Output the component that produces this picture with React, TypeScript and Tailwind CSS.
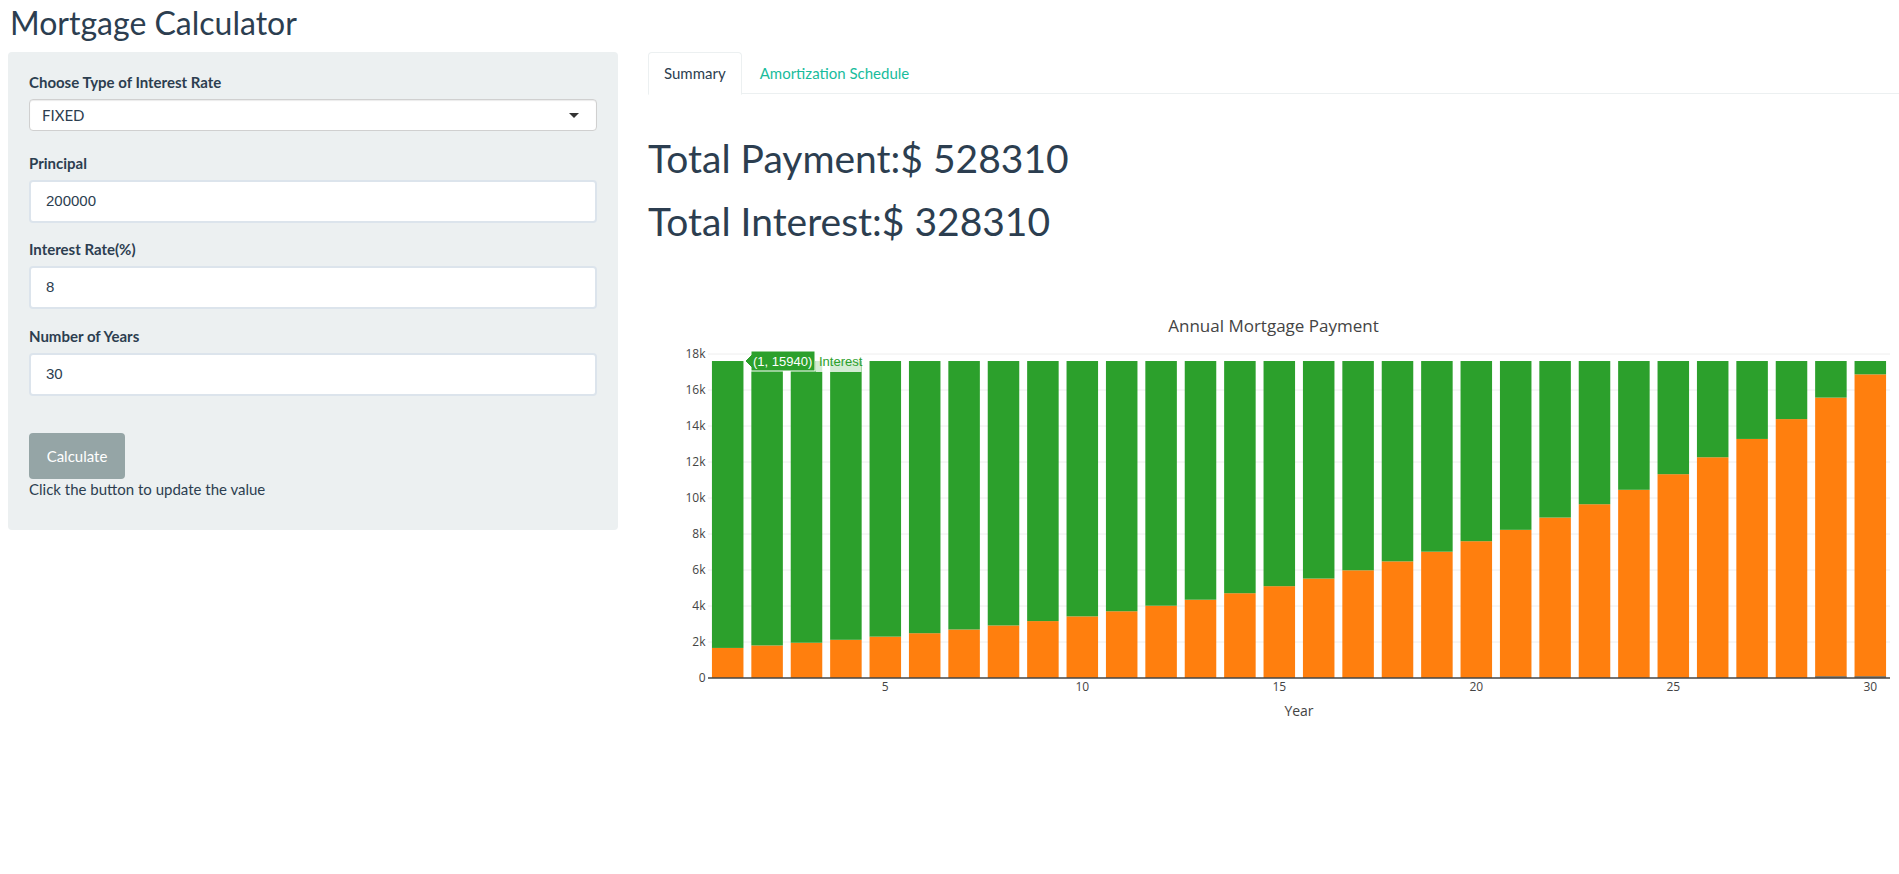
import React from "react";

type YearRow = { year: number; interest: number; principal: number };

function amortize(P: number, annualRate: number, years: number): YearRow[] {
  const r = annualRate / 100 / 12;
  const n = years * 12;
  const M = (P * r) / (1 - Math.pow(1 + r, -n));
  let bal = P;
  const rows: YearRow[] = [];
  for (let y = 1; y <= years; y++) {
    let interest = 0;
    let principal = 0;
    for (let m = 0; m < 12; m++) {
      const i = bal * r;
      const p = M - i;
      bal -= p;
      interest += i;
      principal += p;
    }
    rows.push({ year: y, interest, principal });
  }
  return rows;
}

function Chart({ rows }: { rows: YearRow[] }) {
  const X0 = 60;
  const X1 = 1242;
  const Y0 = 398;
  const k = 324 / 18000;
  const step = (X1 - X0) / rows.length;
  const bw = step * 0.8;
  const grid = [2000, 4000, 6000, 8000, 10000, 12000, 14000, 16000, 18000];
  const yLabels = [0, ...grid];
  const xTicks = [5, 10, 15, 20, 25, 30];
  return (
    <svg width={1251} height={450} className="block font-['Open_Sans',sans-serif]">
      <text x={625.5} y={52} textAnchor="middle" fontSize={17} fill="#444">
        Annual Mortgage Payment
      </text>
      {grid.map((g) => (
        <line key={g} x1={X0} x2={X1} y1={Y0 - g * k} y2={Y0 - g * k} stroke="#eee" strokeWidth={1} />
      ))}
      {yLabels.map((g) => (
        <text key={g} x={57.5} y={Y0 - g * k + 4.3} textAnchor="end" fontSize={12} fill="#444">
          {g === 0 ? "0" : `${g / 1000}k`}
        </text>
      ))}
      {rows.map((row, idx) => {
        const cx = X0 + (idx + 0.5) * step;
        const ph = row.principal * k;
        const ih = row.interest * k;
        return (
          <g key={row.year}>
            <rect x={cx - bw / 2} y={Y0 - ph} width={bw} height={ph} fill="#ff7f0e" />
            <rect x={cx - bw / 2} y={Y0 - ph - ih} width={bw} height={ih} fill="#2ca02c" />
            {row.year >= 29 && (
              <rect x={cx - bw / 2} y={Y0 - 1.5} width={bw} height={1} fill="#1f77b4" />
            )}
          </g>
        );
      })}
      <line x1={X0} x2={X1} y1={Y0} y2={Y0} stroke="#444" strokeWidth={1.3} />
      {xTicks.map((t) => (
        <text key={t} x={X0 + (t - 0.5) * step} y={411} textAnchor="middle" fontSize={12} fill="#444">
          {t}
        </text>
      ))}
      <text x={651} y={436} textAnchor="middle" fontSize={14} fill="#444">
        Year
      </text>
      <path d="M97,81 l6,-6 v-4 h64 v20 h-64 v-4 z" fill="#2ca02c" stroke="#ffffff" strokeWidth={1} />
      <rect x={167.5} y={71} width={46} height={21} fill="#ffffff" fillOpacity={0.8} />
      <text x={105} y={86} fontSize={13} fill="#ffffff" className="font-['Liberation_Sans',Arial,sans-serif]">
        (1, 15940)
      </text>
      <text x={171} y={86} fontSize={13} fill="#2ca02c" className="font-['Liberation_Sans',Arial,sans-serif]">
        Interest
      </text>
    </svg>
  );
}

function Field({ label, value, mb }: { label: string; value: string; mb: string }) {
  return (
    <div className={mb}>
      <div className="h-[21px] text-[15px] leading-[21px] font-bold mb-[6px]">{label}</div>
      <div className="h-[43px] rounded-[4px] border-2 border-[#dce4ec] bg-white flex items-center px-[15px] font-['Liberation_Sans',Arial,sans-serif] text-[15px] text-[#2c3e50]">
        {value}
      </div>
    </div>
  );
}

export default function App() {
  const rows = amortize(200000, 8, 30);
  return (
    <div className="min-h-screen bg-white font-['Lato',sans-serif] text-[#2c3e50]">
      <h2 className="pl-[10px] pt-[5px] text-[32px] leading-[35px] mb-[12px]">Mortgage Calculator</h2>
      <div className="flex items-start">
        <div className="ml-[8px] w-[610px] shrink-0 rounded-[4px] bg-[#ecf0f1] px-[21px] pt-[20px] pb-[30px]">
          <div className="mb-[22px]">
            <div className="h-[21px] text-[15px] leading-[21px] font-bold mb-[6px]">Choose Type of Interest Rate</div>
            <div className="h-[32px] rounded-[4px] border border-[#d0d0d0] bg-white flex items-center justify-between pl-[12px] pr-[17px] text-[15px] shadow-[inset_0_1px_1px_rgba(0,0,0,0.08)]">
              <span>FIXED</span>
              <svg width="10" height="5" viewBox="0 0 10 5">
                <path d="M0,0 H10 L5,5 Z" fill="#333" />
              </svg>
            </div>
          </div>
          <Field label="Principal" value="200000" mb="mb-[16px]" />
          <Field label="Interest Rate(%)" value="8" mb="mb-[17px]" />
          <Field label="Number of Years" value="30" mb="mb-[37px]" />
          <button className="h-[46px] w-[96px] rounded-[4px] bg-[#95a5a6] text-white text-[15px] leading-[21px]">
            Calculate
          </button>
          <div className="text-[15px] leading-[21px]">Click the button to update the value</div>
        </div>
        <div className="ml-[30px] flex-1 min-w-0">
          <div className="flex border-b border-[#ecf0f1] h-[42px]">
            <div className="h-[43px] px-[15px] pt-[10px] border border-[#ecf0f1] border-b-white rounded-t-[4px] bg-white text-[15px] leading-[21px] text-[#2c3e50] mr-[2px]">
              Summary
            </div>
            <div className="px-[16px] pt-[11px] text-[15px] leading-[21px] text-[#18bc9c]">Amortization Schedule</div>
          </div>
          <h1 className="mt-[43px] text-[39px] leading-[43px]">Total Payment:$ 528310</h1>
          <h1 className="mt-[20px] text-[39px] leading-[43px]">Total Interest:$ 328310</h1>
          <div className="mt-[37px]">
            <Chart rows={rows} />
          </div>
        </div>
      </div>
    </div>
  );
}
